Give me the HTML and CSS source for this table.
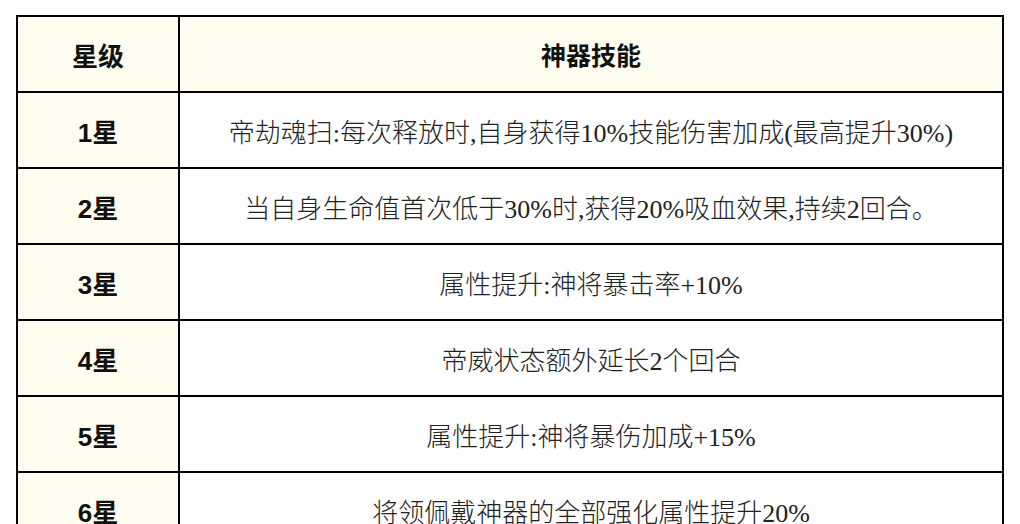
FILE: index.html
```html
<!DOCTYPE html>
<html lang="zh">
<head>
<meta charset="utf-8">
<title>神器技能</title>
<link rel="stylesheet" href="styles.css">
</head>
<body>
<table class="skills">
  <thead>
    <tr>
      <th class="star">星级</th>
      <th class="skill-head">神器技能</th>
    </tr>
  </thead>
  <tbody>
    <tr><td class="star">1星</td><td class="desc">帝劫魂扫:每次释放时,自身获得10%技能伤害加成(最高提升30%)</td></tr>
    <tr><td class="star">2星</td><td class="desc">当自身生命值首次低于30%时,获得20%吸血效果,持续2回合。</td></tr>
    <tr><td class="star">3星</td><td class="desc">属性提升:神将暴击率+10%</td></tr>
    <tr><td class="star">4星</td><td class="desc">帝威状态额外延长2个回合</td></tr>
    <tr><td class="star">5星</td><td class="desc">属性提升:神将暴伤加成+15%</td></tr>
    <tr><td class="star">6星</td><td class="desc">将领佩戴神器的全部强化属性提升20%</td></tr>
  </tbody>
</table>
</body>
</html>
```
FILE: styles.css
```css
html, body {
  margin: 0;
  background: #ffffff;
}
body {
  padding: 15px 0 0 16px;
}
.skills {
  border-collapse: separate;
  border-spacing: 0;
  width: 988px;
  table-layout: fixed;
  border-top: 2px solid #000;
  border-left: 2px solid #000;
}
.skills th,
.skills td {
  border-right: 2px solid #000;
  border-bottom: 2px solid #000;
  height: 74px;
  padding: 0;
  text-align: center;
  vertical-align: middle;
}
.skills thead th {
  background: #fffdf0;
}
.star {
  width: 160px;
  background: #fffdf0;
  font-family: "Liberation Sans", "Noto Sans CJK SC", sans-serif;
  font-weight: 700;
  font-size: 26px;
  color: #111;
}
.skill-head {
  font-family: "Liberation Sans", "Noto Sans CJK SC", sans-serif;
  font-weight: 700;
  font-size: 25px;
  color: #111;
}
.desc {
  background: #ffffff;
  font-family: "Liberation Serif", "Noto Sans CJK SC", serif;
  font-weight: 300;
  font-size: 26px;
  color: #222;
}
```
